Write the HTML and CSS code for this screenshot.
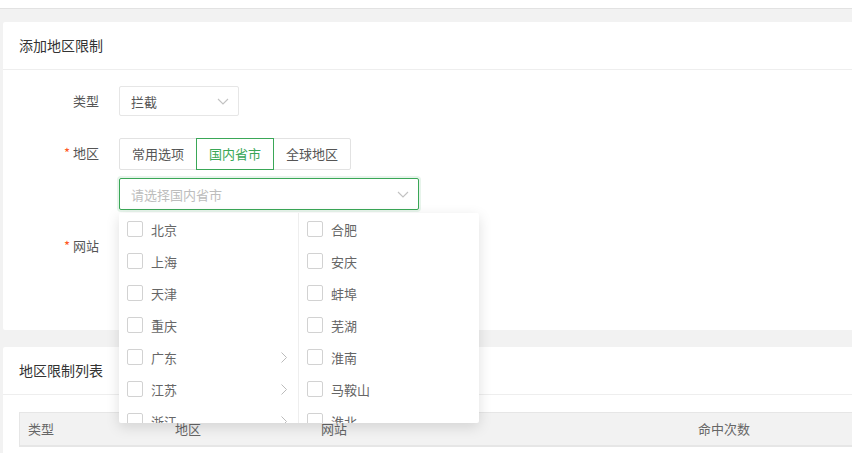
FILE: index.html
```html
<!DOCTYPE html>
<html lang="zh-CN">
<head>
<meta charset="utf-8">
<link rel="stylesheet" href="styles.css">
</head>
<body>
<div class="topbar"></div>
<main class="content">
  <section class="card card-form">
    <div class="card-header">添加地区限制</div>
    <div class="card-body">
      <div class="form-row form-row-type">
        <label class="form-label">类型</label>
        <div class="select select-small">
          <span class="select-value">拦截</span>
          <svg class="chev" viewBox="0 0 12 7" width="12" height="7"><path d="M1 1l5 5 5-5" fill="none" stroke="#c2c2c2" stroke-width="1.1"/></svg>
        </div>
      </div>
      <div class="form-row form-row-region">
        <label class="form-label"><span class="req">*</span> 地区</label>
        <div class="region-field">
          <div class="btn-group">
            <span class="btn">常用选项</span>
            <span class="btn btn-active">国内省市</span>
            <span class="btn">全球地区</span>
          </div>
          <div class="select select-wide select-focus">
            <span class="select-placeholder">请选择国内省市</span>
            <svg class="chev" viewBox="0 0 12 7" width="12" height="7"><path d="M1 1l5 5 5-5" fill="none" stroke="#c2c2c2" stroke-width="1.1"/></svg>
          </div>
          <div class="dropdown">
            <ul class="col">
              <li><i class="cb"></i>北京</li>
              <li><i class="cb"></i>上海</li>
              <li><i class="cb"></i>天津</li>
              <li><i class="cb"></i>重庆</li>
              <li><i class="cb"></i>广东<svg class="arrow" viewBox="0 0 6 11" width="6" height="11"><path d="M0.5 0.5l5 5-5 5" fill="none" stroke="#bbb" stroke-width="1"/></svg></li>
              <li><i class="cb"></i>江苏<svg class="arrow" viewBox="0 0 6 11" width="6" height="11"><path d="M0.5 0.5l5 5-5 5" fill="none" stroke="#bbb" stroke-width="1"/></svg></li>
              <li><i class="cb"></i>浙江<svg class="arrow" viewBox="0 0 6 11" width="6" height="11"><path d="M0.5 0.5l5 5-5 5" fill="none" stroke="#bbb" stroke-width="1"/></svg></li>
            </ul>
            <ul class="col col-right">
              <li><i class="cb"></i>合肥</li>
              <li><i class="cb"></i>安庆</li>
              <li><i class="cb"></i>蚌埠</li>
              <li><i class="cb"></i>芜湖</li>
              <li><i class="cb"></i>淮南</li>
              <li><i class="cb"></i>马鞍山</li>
              <li><i class="cb"></i>淮北</li>
            </ul>
          </div>
        </div>
      </div>
      <div class="form-row">
        <label class="form-label"><span class="req">*</span> 网站</label>
        <div class="select select-wide select-hidden"></div>
      </div>
    </div>
  </section>
  <section class="card card-list">
    <div class="card-header">地区限制列表</div>
    <div class="card-body card-body-table">
      <div class="table">
        <div class="thead">
          <div class="th th1">类型</div>
          <div class="th th2">地区</div>
          <div class="th th3">网站</div>
          <div class="th th4">命中次数</div>
        </div>
      </div>
    </div>
  </section>
</main>
</body>
</html>
```
FILE: styles.css
```css
* { box-sizing: border-box; }
html, body { margin: 0; padding: 0; }
body {
  background: #f2f2f2;
  font-family: "Noto Sans CJK SC", "Noto Sans", sans-serif;
  color: #666;
  font-size: 13px;
  width: 852px;
  height: 453px;
  overflow: hidden;
}
.topbar {
  height: 9px;
  background: #fff;
  border-bottom: 1px solid #e2e2e2;
}
.content {
  padding: 13px 0 0 3px;
  display: flex;
  flex-direction: column;
  gap: 17px;
}
.card {
  background: #fff;
  border-radius: 2px;
  width: 860px;
}
.card-header {
  height: 48px;
  line-height: 47px;
  padding: 0 16px;
  font-size: 14px;
  color: #333;
  border-bottom: 1px solid #eee;
}
.card-form { height: 308px; }
.card-body { padding: 16px 16px 0 0; }
.form-row {
  display: flex;
  align-items: flex-start;
  margin-bottom: 21px;
}
.form-row-type { margin-bottom: 22px; }
.form-row-region { margin-bottom: 21px; }
.form-label {
  width: 96px;
  margin-right: 20px;
  text-align: right;
  line-height: 30px;
  height: 30px;
  color: #555;
  font-size: 13px;
}
.req { color: #ff5722; }
.select {
  position: relative;
  height: 30px;
  border: 1px solid #e6e6e6;
  border-radius: 2px;
  display: flex;
  align-items: center;
  padding: 0 11px;
  background: #fff;
}
.select-small { width: 120px; }
.select-wide { width: 300px; }
.select-hidden { border-color: #e6e6e6; }
.select-value { color: #555; }
.select-placeholder { color: #bdbdbd; }
.select-focus {
  border-color: #3aa757;
  box-shadow: 0 0 0 2px rgba(58,167,87,0.12);
  height: 32px;
}
.chev {
  position: absolute;
  right: 9px;
  top: 50%;
  margin-top: -3px;
}
.region-field {
  position: relative;
  display: flex;
  flex-direction: column;
  gap: 8px;
}
.btn-group { display: flex; }
.btn {
  height: 32px;
  line-height: 30px;
  width: 78px;
  text-align: center;
  border: 1px solid #e2e2e2;
  color: #555;
  background: #fff;
  margin-left: -1px;
}
.btn:first-child { margin-left: 0; border-radius: 2px 0 0 2px; }
.btn:last-child { border-radius: 0 2px 2px 0; }
.btn-active {
  border-color: #3aa757;
  color: #3aa757;
  position: relative;
  z-index: 1;
}
.dropdown {
  position: absolute;
  left: 0;
  top: 75px;
  width: 360px;
  height: 210px;
  background: #fff;
  display: flex;
  overflow: hidden;
  border-radius: 2px;
  box-shadow: 0 4px 14px rgba(0,0,0,0.13);
  z-index: 10;
}
.col {
  list-style: none;
  margin: 0;
  padding: 0;
  width: 180px;
  border-right: 1px solid #eee;
}
.col-right { border-right: none; width: 180px; }
.col li {
  position: relative;
  height: 32px;
  display: flex;
  align-items: center;
  padding-left: 8px;
  color: #666;
  font-size: 13px;
}
.cb {
  width: 16px;
  height: 16px;
  border: 1px solid #d2d2d2;
  border-radius: 2px;
  margin-right: 8px;
  background: #fff;
}
.arrow {
  position: absolute;
  right: 11px;
  top: 50%;
  margin-top: -5px;
}
.card-list { height: 200px; }
.card-body-table { padding: 17px 0 0 16px; }
.table {
  border: 1px solid #e6e6e6;
  border-right: none;
}
.thead {
  display: flex;
  height: 33px;
  background: #f2f2f2;
  border-bottom: 1px solid #e6e6e6;
}
.th {
  line-height: 32px;
  padding-left: 8px;
  color: #666;
  font-size: 13px;
}
.th1 { width: 147px; }
.th2 { width: 146px; }
.th3 { width: 377px; }
.th4 { flex: 1; }
```
